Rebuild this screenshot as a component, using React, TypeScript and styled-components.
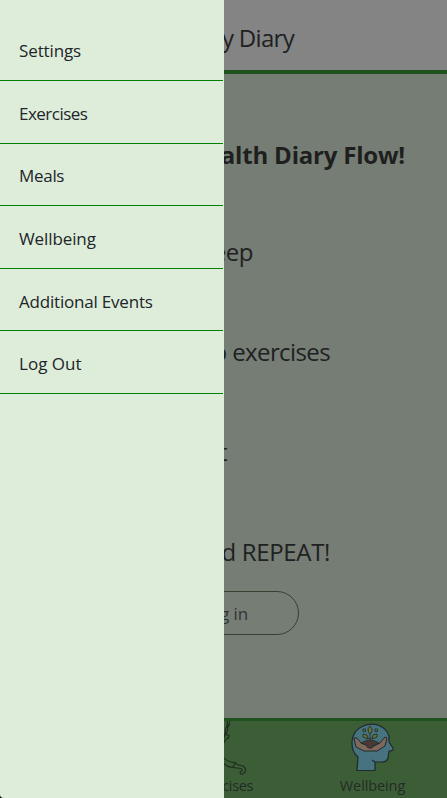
import React from "react";
import styled, { createGlobalStyle } from "styled-components";

const Global = createGlobalStyle`
  * { box-sizing: border-box; }
  html { background: #000; }
  body { margin: 0; overflow: hidden; font-family: "Segoe UI", "Open Sans", sans-serif; color: #202122; }
`;
const Screen = styled.div`
  position: relative;
  width: 447px;
  height: 798px;
  overflow: hidden;
  display: flex;
  flex-direction: column;
  background: #757d74;
  border-bottom-left-radius: 4px;
`;
const Header = styled.header`
  height: 74px;
  flex: none;
  display: flex;
  justify-content: flex-end;
  padding: 21px 153px 0 0;
  background: #848484;
  border-bottom: 4px solid #1f511f;
  font-size: 24px;
  line-height: 34px;
  letter-spacing: -0.7px;
  white-space: nowrap;
`;
const Main = styled.main`
  flex: 1;
  display: flex;
  flex-direction: column;
  align-items: flex-end;
  white-space: nowrap;
`;
const Title = styled.h1`
  margin: 61px 42px 0 0;
  font-size: 24px;
  line-height: 40px;
  font-weight: 700;
  letter-spacing: -0.2px;
  color: #1e1f1e;
`;
const Step = styled.p<{ $right: number; $top?: number; $spacing?: number }>`
  margin: ${p => p.$top ?? 60}px ${p => p.$right}px 0 0;
  font-size: 24px;
  line-height: 40px;
  letter-spacing: ${p => p.$spacing ?? -0.5}px;
`;
const Login = styled.button`
  width: 150px;
  height: 44px;
  flex: none;
  margin: 19px 148px 0 0;
  padding: 0 50px 0 0;
  text-align: right;
  border: 1.5px solid #36422f;
  border-radius: 22px;
  background: transparent;
  color: #303438;
  font: 17px "Segoe UI", "Open Sans", sans-serif;
  letter-spacing: -0.1px;
`;
const Footer = styled.footer`
  height: 80px;
  flex: none;
  display: grid;
  grid-template-columns: repeat(3, 149px);
  border-top: 3px solid #1f511f;
  background: #3c5e36;
`;
const Tab = styled.div`
  display: flex;
  flex-direction: column;
  align-items: center;
  font-size: 14.5px;
  line-height: 22px;
  letter-spacing: -0.1px;
  color: #252b27;
  svg { display: block; height: 54px; width: 54px; }
`;
const TabLabel = styled.span<{ $spacing?: number }>`
  letter-spacing: ${p => p.$spacing ?? -0.1}px;
`;
const Drawer = styled.nav`
  position: absolute;
  inset: 0 auto 0 0;
  width: 224px;
  padding: 18.4px 1px 0 0;
  background: #deedd9;
`;
const Item = styled.a<{ $spacing: number }>`
  display: flex;
  align-items: center;
  height: 62.6px;
  padding: 3px 0 0 19px;
  border-bottom: 1px solid #008000;
  font-size: 17px;
  letter-spacing: ${p => p.$spacing}px;
  color: #212529;
`;

const Head = () => (
  <svg viewBox="0 0 54 54" fill="none" stroke="#20292b" strokeWidth="1.2" strokeLinejoin="round">
    <path d="M11 49.5 12 36 C3 28 4 11 16 5.5 C28 0 40 5 43 15 L43 21 47 27 Q48 30 43 30 L42 37 Q41 41 36 41 L29 41 29 49.5Z" fill="#477280" />
    <path d="M29 41 26 39" />
    <path d="M8 17 11 17 15 22 20 24 24 27 30 24 34 22 39 16 41 17 39 25 31 30 18 30 10 26Z" fill="#80695c" strokeWidth="1" />
    <path d="M15 22 Q24 16 33 22 L28 24 26 27 22 27 20 24Z" fill="#493934" strokeWidth=".7" />
    <path d="M24 19V12 M24 18 18 15 M24 18 30 15" stroke="#29382a" strokeWidth="1" />
    <g fill="#66733c" stroke="#29382a" strokeWidth="1">
      <path d="M24 13 Q20 9 24 5 Q28 9 24 13Z" />
      <path d="M22 18 17 16 17 13 21 14Z M26 18 31 16 31 13 27 14Z" />
      <rect x="17" y="8" width="2.5" height="2.5" /><rect x="29" y="8" width="2.5" height="2.5" />
    </g>
  </svg>
);
const Athlete = () => (
  <svg viewBox="0 0 54 54" fill="none" stroke="#202b21" strokeWidth="1.1" strokeLinejoin="round">
    <path d="M30.5 0 30 5 28.5 8 28 13 27 17 M33 0 31 5 30.5 9 29 13 29.5 14 32 14 32 16 30 18 28.5 18 27 22 M33 3 30 7" />
    <path d="M26 36 Q30 41 38 41.5 L40 43.5 46 45 Q50 48 48 51 L46 53 43.5 53 43 51 45.5 49.5 44 47.5 36 46.5 Q30 46 26 42 M38 42 36 46" />
  </svg>
);

const items = [
  { label: "Settings", spacing: -0.12 },
  { label: "Exercises", spacing: -0.52 },
  { label: "Meals", spacing: -0.3 },
  { label: "Wellbeing", spacing: -0.1 },
  { label: "Additional Events", spacing: -0.2 },
  { label: "Log Out", spacing: 0.02 },
];
export default function App() {
  return (
    <>
      <Global />
      <Screen>
        <Header>My Diary</Header>
        <Main>
          <Title>Health Diary Flow!</Title>
          <Step $right={194} $top={57}>Sleep</Step>
          <Step $right={117} $spacing={-0.6}>Do exercises</Step>
          <Step $right={220}>Eat</Step>
          <Step $right={117} $spacing={-0.35}>and REPEAT!</Step>
          <Login>Log in</Login>
        </Main>
        <Footer>
          <Tab />
          <Tab><Athlete /><TabLabel $spacing={-0.35}>Exercises</TabLabel></Tab>
          <Tab><Head /><TabLabel>Wellbeing</TabLabel></Tab>
        </Footer>
        <Drawer>{items.map(({ label, spacing }) => <Item key={label} $spacing={spacing}>{label}</Item>)}</Drawer>
      </Screen>
    </>
  );
}
